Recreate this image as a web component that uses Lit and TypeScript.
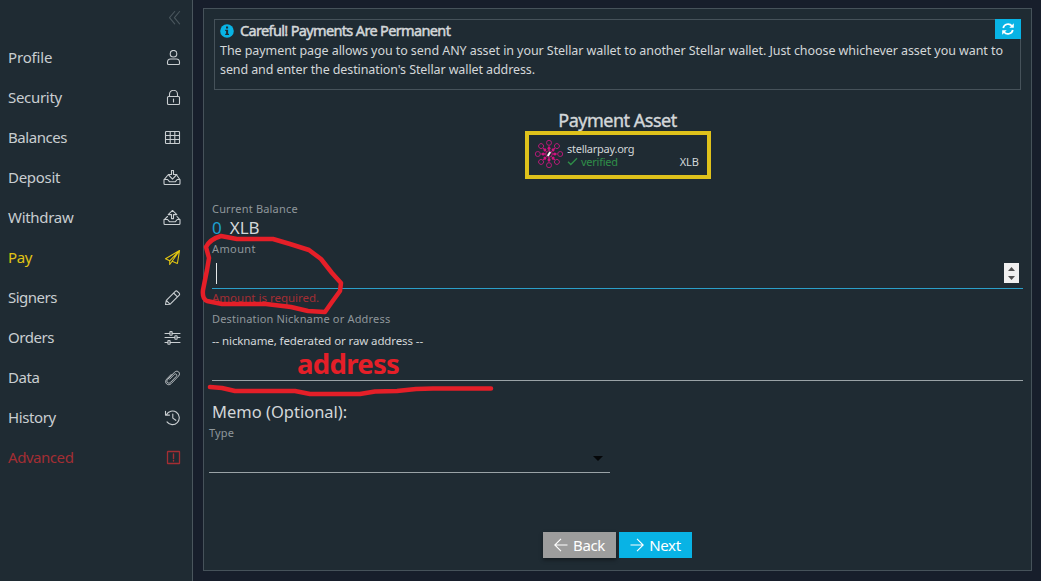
import { LitElement, css, html, svg } from 'lit';
import { customElement, property } from 'lit/decorators.js';
import { styleMap } from 'lit/directives/style-map.js';

const icons = {
  user: svg`<circle cx="10.5" cy="3.7" r="3.3"/><path d="M7.6 9h5.8a3.2 3.2 0 0 1 3.1 3.2v1.3a1 1 0 0 1-1 1h-10a1 1 0 0 1-1-1v-1.3A3.2 3.2 0 0 1 7.6 9z"/>`,
  lock: svg`<rect x="4.5" y="6.5" width="12" height="8" rx="1"/><path d="M6.5 6.5V4.3a4 4 0 0 1 8 0v2.2M10.5 9v3"/>`,
  table: svg`<rect x="2.5" y="1.5" width="14" height="12" rx=".8"/><path d="M2.5 5.5h14M2.5 9.5h14M7.2 1.5v12M11.8 1.5v12"/>`,
  deposit: svg`<path d="M8.5.5v4H5.2l4.3 4.6 4.3-4.6h-3.3v-4z"/><path d="M4.5 5.5 1 9.8v3.7a1 1 0 0 0 1 1h14a1 1 0 0 0 1-1V9.8l-3-4.3M1 9.5h3.6l1.8 2.2h6l1.8-2.2H17"/>`,
  withdraw: svg`<path d="M8.5 8.6v-4H5.2L9.5.4l4.3 4.2h-3.3v4z"/><path d="M4.5 6.5 1 9.8v3.7a1 1 0 0 0 1 1h14a1 1 0 0 0 1-1V9.8l-3-3.3M1 9.5h3.6l1.8 2.2h6l1.8-2.2H17"/>`,
  plane: svg`<path d="M16.5.6 2.5 8.7l4.2 2.1 9.8-10.2-2.1 12.9-5.3-2.3L16.5.6M6.7 10.8v3.7l2.4-3.3"/>`,
  pencil: svg`<path d="m2.5 14.5.8-4.2 9-9a1.4 1.4 0 0 1 2 0l1.900 1.900a1.400 1.400 0 0 1 0 2l-9 9zM10.600 3l3.900 3.900M3.300 10.300l3.400 3.600"/>`,
  sliders: svg`<path d="M2 3.500h4.800M9.200 3.500H17M2 7.500h9.800M14.200 7.500H17M2 12.500h2.800M7.200 12.500H17"/><rect x="6.900" y="1.600" width="2.200" height="3.600" rx=".5"/><rect x="11.900" y="5.700" width="2.200" height="3.600" rx=".5"/><rect x="4.900" y="10.600" width="2.200" height="3.600" rx=".5"/>`,
  clip: svg`<path stroke-width=".9" d="m6.600 9.200 4.600-4.700c1.600-1.600 3.500.4 2.100 1.900l-5.700 5.900c-2.400 2.300-5.100-.5-2.900-2.900l6.800-7.200c3-2.800 6.800.9 4 3.900l-7.400 7.600c-3.300 3-7.400-1.200-4.500-4.500l4.600-4.800"/>`,
  history: svg`<path d="M3.400 4.700a6.800 6.800 0 1 1 .6 7.200M2.500 1.200v3.900h4M9.800 4v4.100l3 2.200"/>`,
  alert: svg`<rect x="4.500" y="1.500" width="12" height="12" rx=".3" stroke-width="1.300"/><path stroke-width="1.400" d="M10.500 4v4.500M10.500 10.400v.6"/>`,
  collapse: svg`<path d="M11.700 1.500 6.500 7.700l5.200 6.200M16.600 1.500l-5.200 6.200 5.200 6.200"/>`,
};

type IconName = keyof typeof icons;

interface MenuEntry {
  label: string;
  icon: IconName;
  spacing: number;
  tone?: 'active' | 'danger';
}

const MENU: MenuEntry[] = [
  { label: 'Profile', icon: 'user', spacing: -0.15 },
  { label: 'Security', icon: 'lock', spacing: -0.3 },
  { label: 'Balances', icon: 'table', spacing: -0.45 },
  { label: 'Deposit', icon: 'deposit', spacing: -0.3 },
  { label: 'Withdraw', icon: 'withdraw', spacing: -0.3 },
  { label: 'Pay', icon: 'plane', spacing: -0.4, tone: 'active' },
  { label: 'Signers', icon: 'pencil', spacing: -0.5 },
  { label: 'Orders', icon: 'sliders', spacing: -0.45 },
  { label: 'Data', icon: 'clip', spacing: -0.4 },
  { label: 'History', icon: 'history', spacing: -0.4 },
  { label: 'Advanced', icon: 'alert', spacing: -0.45, tone: 'danger' },
];

@customElement('line-icon')
export class LineIcon extends LitElement {
  @property({ type: String }) name: IconName = 'user';

  render() {
    return html`<svg width="18" height="16" viewBox="0 0 18 16">${icons[this.name]}</svg>`;
  }

  static styles = css`
    :host {
      display: block;
      width: 18px;
      height: 16px;
    }

    svg {
      display: block;
      fill: none;
      stroke: currentColor;
      stroke-width: 1.1;
      stroke-linejoin: round;
      stroke-linecap: round;
    }
  `;
}

@customElement('side-menu')
export class SideMenu extends LitElement {
  render() {
    return html`
      <div class="top"><line-icon name="collapse"></line-icon></div>
      ${MENU.map(
        (item) => html`
          <a class="item ${item.tone ?? ''}">
            <span class="label" style=${styleMap({ letterSpacing: `${item.spacing}px` })}>${item.label}</span>
            <line-icon name=${item.icon}></line-icon>
          </a>
        `
      )}
    `;
  }

  static styles = css`
    :host {
      display: flex;
      flex-direction: column;
      box-sizing: border-box;
      width: 193px;
      height: 100%;
      border-right: 1px solid #4a565d;
      background: #1f2b33;
      color: #c9ced1;
      font-size: 15px;
    }

    .top {
      display: flex;
      justify-content: flex-end;
      height: 28px;
      padding: 10px 11px 0 0;
      color: #4a565d;
    }

    .item {
      display: flex;
      align-items: center;
      justify-content: space-between;
      height: 40px;
      padding: 0 11px 0 8px;
    }

    .label {
      padding-bottom: 2px;
    }

    .active {
      color: #e0c413;
    }

    .danger {
      color: #a32e33;
    }
  `;
}

@customElement('asset-logo')
export class AssetLogo extends LitElement {
  render() {
    const spokes = [0, 45, 90, 135, 180, 225, 270, 315];
    return html`
      <svg width="30" height="30" viewBox="-15 -15 30 30">
        ${spokes.map(
          (angle) => svg`
            <g transform="rotate(${angle})">
              <path d="M0-3v-5.500" />
              <circle class="dot" cy="-5.800" r="1.500" />
              <circle cy="-11.200" r="2.500" />
            </g>
          `
        )}
        <circle class="core" r="3.300" />
        <path class="slash" d="M-1.200 2 1.200-2" />
      </svg>
    `;
  }

  static styles = css`
    svg {
      display: block;
      fill: none;
      stroke: #c2187c;
      stroke-width: 0.9;
    }

    .dot {
      fill: #d3127f;
      stroke: none;
    }

    .core {
      fill: #28232f;
    }

    .slash {
      stroke: #fff;
      stroke-width: 2;
    }
  `;
}

@customElement('payment-form')
export class PaymentForm extends LitElement {
  render() {
    return html`
      <section class="notice">
        <div class="notice-text">
          <h3>
            <svg width="14" height="14" viewBox="0 0 14 14">
              <circle cx="7" cy="7" r="6.800" fill="#08b3e5" />
              <path d="M6 2.600h2.100v2H6zM5.200 5.700h2.900v4h.9v1.300H5.200V9.700h.9V7h-.9z" fill="#1f2b33" />
            </svg>
            <span>Careful! Payments Are Permanent</span>
          </h3>
          <p class="l1">The payment page allows you to send ANY asset in your Stellar wallet to another Stellar wallet. Just choose whichever asset you want to</p>
          <p class="l2">send and enter the destination's Stellar wallet address.</p>
        </div>
        <button class="refresh" aria-label="Refresh">
          <svg width="12" height="12" viewBox="0 0 12 12">
            <path d="M1.200 5A5 5 0 0 1 10 3M10.800 7A5 5 0 0 1 2 9" fill="none" stroke="#fff" stroke-width="1.700" />
            <path d="M11.800.3v4.500H7.300zM.2 11.700V7.200h4.500z" fill="#fff" />
          </svg>
        </button>
      </section>

      <h2>Payment Asset</h2>
      <div class="asset">
        <asset-logo></asset-logo>
        <div class="issuer">
          <span class="domain">stellarpay.org</span>
          <span class="verified">
            <svg width="11" height="9" viewBox="0 0 11 9"><path d="m1 4.700 2.800 2.800L10 1.200" fill="none" stroke="currentColor" stroke-width="1.300" /></svg>
            <span>verified</span>
          </span>
        </div>
        <span class="code">XLB</span>
      </div>

      <div class="fields">
        <label class="balance-label">Current Balance</label>
        <div class="balance"><b>0</b><span>XLB</span></div>
        <label class="amount-label">Amount</label>
        <div class="amount">
          <i class="caret"></i>
          <span class="spinner">
            <svg width="15" height="20" viewBox="0 0 15 20"><path d="M4 8h7L7.500 4zM4 13h7l-3.500 4z" fill="#505050" /></svg>
          </span>
        </div>
        <div class="error">Amount is required.</div>
        <label class="dest-label">Destination Nickname or Address</label>
        <div class="dest">-- nickname, federated or raw address --</div>
        <div class="memo">Memo (Optional):</div>
      </div>
      <label class="type-label">Type</label>
      <div class="select">
        <svg width="10" height="5" viewBox="0 0 10 5"><path d="M0 0h10L5 5z" fill="#050709" /></svg>
      </div>

      <div class="actions">
        <button class="back">
          <svg width="14" height="14" viewBox="0 0 14 14"><path d="M13.500 7H.8M7 .8.8 7 7 13.200" /></svg>
          <span>Back</span>
        </button>
        <button class="next">
          <svg width="14" height="14" viewBox="0 0 14 14"><path d="M.5 7h12.700M7 .8 13.200 7 7 13.200" /></svg>
          <span>Next</span>
        </button>
      </div>
    `;
  }

  static styles = css`
    :host {
      display: flex;
      flex-direction: column;
      box-sizing: border-box;
      width: 829px;
      height: 563px;
      border: 1px solid #46525a;
      background: #1f2b33;
      color: #d3d7d9;
      white-space: nowrap;
    }

    h2,
    h3,
    p {
      margin: 0;
      font-weight: 400;
    }

    svg {
      display: block;
      flex: none;
    }

    button {
      border: 0;
      padding: 0;
      font: inherit;
      color: #fff;
      display: flex;
      align-items: center;
      justify-content: center;
    }

    .notice {
      display: flex;
      justify-content: space-between;
      align-items: flex-start;
      box-sizing: border-box;
      height: 71px;
      margin: 10px 10px 0;
      border: 1px solid #46525a;
    }

    .notice-text {
      padding-left: 5px;
      width: 770px;
    }

    h3 {
      display: flex;
      align-items: center;
      gap: 6px;
      height: 21px;
      font-size: 14.5px;
      line-height: 18px;
      letter-spacing: -0.65px;
      -webkit-text-stroke: 0.5px currentColor;
    }

    h3 span {
      padding-bottom: 2px;
    }

    h3 svg {
      -webkit-text-stroke: 0;
    }

    p {
      height: 19px;
      line-height: 19px;
      font-size: 12.5px;
    }

    .l1 {
      letter-spacing: -0.07px;
    }

    .l2 {
      letter-spacing: -0.1px;
    }

    .refresh {
      width: 26px;
      height: 20px;
      margin: -1px -1px 0 0;
      background: #08b3e5;
    }

    h2 {
      height: 23px;
      margin-top: 18px;
      line-height: 25px;
      text-align: center;
      font-size: 18px;
      letter-spacing: -0.5px;
      -webkit-text-stroke: 0.4px currentColor;
    }

    .asset {
      display: flex;
      box-sizing: border-box;
      width: 186px;
      height: 48px;
      margin: 0 0 1px 321px;
      padding: 4px 8px 0 5px;
      border: 4px solid #dfc21b;
    }

    .issuer {
      display: flex;
      flex-direction: column;
      flex: 1;
      padding: 3px 0 0 3px;
      font-size: 11px;
      line-height: 13px;
      letter-spacing: -0.25px;
    }

    .verified {
      display: flex;
      align-items: center;
      gap: 3px;
      color: #2f8f49;
    }

    .code {
      align-self: flex-start;
      padding-top: 16px;
      font-size: 11px;
      line-height: 13px;
    }

    .fields {
      display: flex;
      flex-direction: column;
      padding: 20px 8px 0;
    }

    label {
      display: block;
      height: 18px;
      line-height: 18px;
      color: #8f979b;
      font-size: 11px;
      letter-spacing: 0.18px;
    }

    .amount-label {
      letter-spacing: 0.4px;
    }

    .balance {
      display: flex;
      gap: 8px;
      height: 22px;
      line-height: 20px;
      font-size: 17px;
    }

    .balance b {
      color: #1d9fd0;
      font-weight: 400;
    }

    .amount {
      display: flex;
      justify-content: space-between;
      box-sizing: border-box;
      height: 31px;
      padding: 5px 4px 0;
      border-bottom: 1px solid #2b9fc9;
    }

    .caret {
      width: 1px;
      height: 21px;
      background: #e6e9ea;
    }

    .spinner {
      height: 20px;
      background: #f0f0f0;
    }

    .error {
      height: 21px;
      line-height: 17px;
      color: #a32e33;
      font-size: 11.5px;
    }

    .dest {
      box-sizing: border-box;
      height: 53px;
      padding-top: 3px;
      border-bottom: 1px solid #9aa3a7;
      font-size: 11.5px;
      line-height: 20px;
      letter-spacing: -0.11px;
    }

    .memo {
      height: 43px;
      line-height: 62px;
      font-size: 16.5px;
    }

    .type-label {
      padding-left: 5px;
    }

    .select {
      display: flex;
      justify-content: flex-end;
      box-sizing: border-box;
      width: 401px;
      height: 31px;
      margin-left: 5px;
      padding: 14px 7px 0 0;
      border-bottom: 1px solid #9aa3a7;
    }

    .actions {
      display: flex;
      justify-content: center;
      gap: 3px;
      margin-top: 59px;
      font-size: 15px;
      letter-spacing: -0.35px;
    }

    .actions button {
      width: 73px;
      height: 26px;
      gap: 5px;
      background: #08b3e5;
      letter-spacing: inherit;
    }

    .actions .back {
      background: #9d9d9d;
      box-shadow: 0 2px 4px rgba(0, 0, 0, 0.4);
    }

    .actions path {
      fill: none;
      stroke: #fff;
      stroke-width: 1.1;
    }
  `;
}

@customElement('ink-notes')
export class InkNotes extends LitElement {
  render() {
    return html`
      <svg width="1041" height="581" viewBox="0 0 1041 581">
        <path d="M206 247C209 241 214 238 221 236L237 239H273L290 244 309 250 321 259 332 273 341 283 340 291 332 302 325 312 308 311 291 307 266 304H222L207 301Q202 299 203 290L207 270 209 258 206 247" />
        <path d="M210 387 222 388 235 391H295L310 394H360L375 391.500 397 391 416 389 433 388.500H491" />
      </svg>
      <div class="word">address</div>
    `;
  }

  static styles = css`
    :host {
      position: absolute;
      inset: 0;
      pointer-events: none;
    }

    svg {
      display: block;
    }

    path {
      fill: none;
      stroke: #e51f28;
      stroke-width: 4.5;
      stroke-linejoin: round;
      stroke-linecap: round;
    }

    .word {
      position: absolute;
      left: 297px;
      top: 352px;
      color: #e51f28;
      font: 700 27.5px/24px 'Noto Sans', sans-serif;
      letter-spacing: -0.7px;
    }
  `;
}

@customElement('app-root')
export class AppRoot extends LitElement {
  render() {
    return html`
      <side-menu></side-menu>
      <main><payment-form></payment-form></main>
      <ink-notes></ink-notes>
    `;
  }

  static styles = css`
    :host {
      display: flex;
      position: relative;
      width: 1041px;
      height: 581px;
      overflow: hidden;
      background: #171e2b;
      font-family: 'Noto Sans', 'Open Sans', sans-serif;
    }

    main {
      padding: 8px 0 0 10px;
    }
  `;
}
